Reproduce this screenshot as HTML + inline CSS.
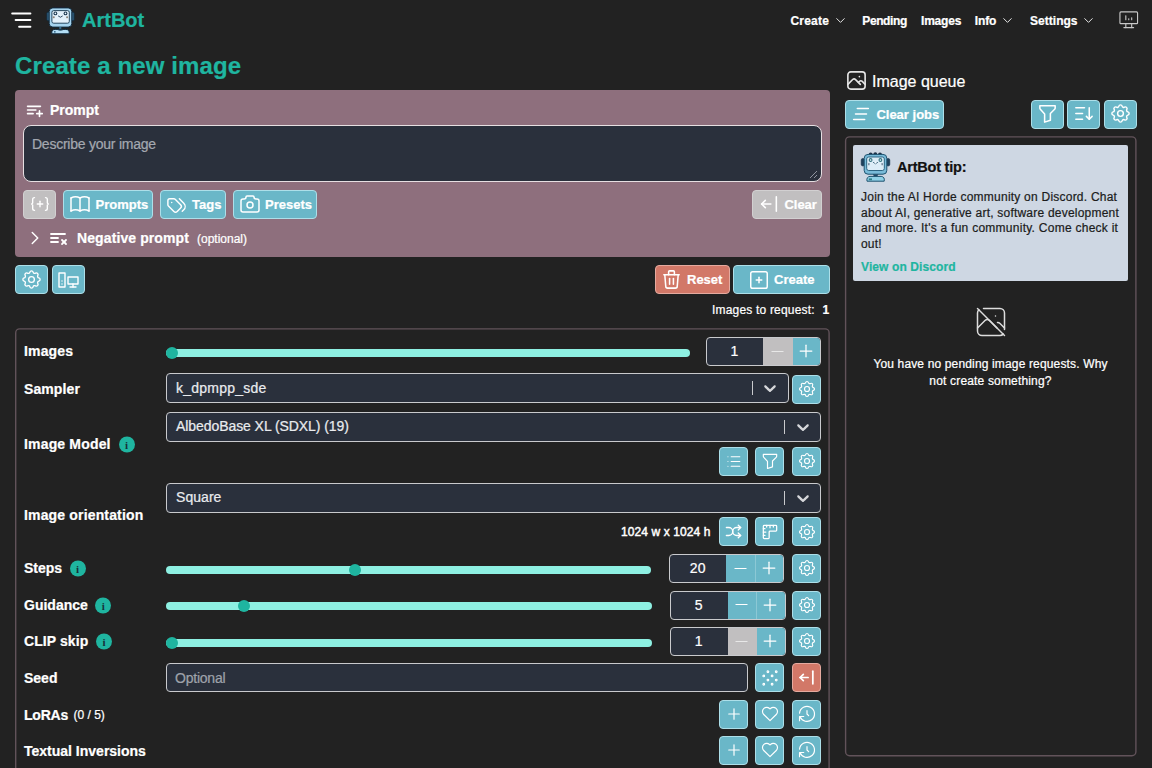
<!DOCTYPE html>
<html lang="en">
<head>
<meta charset="utf-8">
<title>ArtBot - Create a new image</title>
<style>
*{box-sizing:border-box;margin:0;padding:0}
html,body{width:1152px;height:768px;overflow:hidden;background:#222222;}
body{font-family:"Liberation Sans",Arial,Helvetica,sans-serif;color:#fff;position:relative;font-size:14px;}
.abs{position:absolute}
.t{position:absolute;white-space:nowrap;line-height:1;-webkit-text-stroke:0.22px}
.b{font-weight:700}
.teal{color:#1fb5a0}
.btn{position:absolute;background:#6ab7c8;border:1px solid #addfe9;border-radius:4px}
.btn.grey{background:#c1bfc0;border-color:#d2d0d1}
.btn.red{background:#d27868;border-color:#e5aa9f}
.inp{position:absolute;background:#2a303c;border:1px solid #c9cacd;border-radius:4px}
svg{display:block;overflow:visible}
.track{position:absolute;height:8px;border-radius:4px;background:#8ef0e2}
.thumb{position:absolute;width:12px;height:12px;border-radius:50%;background:#1fb5a0}
.info{position:absolute;width:16px;height:16px;border-radius:50%;background:#1fb5a0;color:#17313a;font:bold 11px/16px "Liberation Serif",serif;text-align:center}
.seg{position:absolute;top:0;bottom:0}
</style>
</head>
<body>
<svg class="abs" style="left:0;top:0" width="40" height="40" viewBox="0 0 40 40"><g stroke="#fff" stroke-width="2" stroke-linecap="round"><path d="M12.2 13.5H30.4"/><path d="M15.6 20.1H30.4"/><path d="M19.1 26.7H30.4"/></g></svg>
<svg class="abs" style="left:44px;top:4px" width="34" height="34" viewBox="44 4 34 34">
<rect x="46.8" y="12" width="3" height="8.8" rx="1.5" fill="#2f5b7a" stroke="#10283a" stroke-width="0.8"/>
<rect x="71.2" y="12" width="3" height="8.8" rx="1.5" fill="#2f5b7a" stroke="#10283a" stroke-width="0.8"/>
<path d="M54 7.6q1.4-1.6 2.8 0q1.4-1.6 2.8 0q1.4-1.6 2.8 0q1.4-1.6 2.8 0" fill="#2a2030" stroke="#2a1a28" stroke-width="0.8"/>
<rect x="49.2" y="7.9" width="22.6" height="19.2" rx="3.6" fill="#a5d3ee" stroke="#0f2a3e" stroke-width="1"/>
<rect x="51.9" y="10.6" width="17.4" height="12.6" rx="1.8" fill="#e3f1fb" stroke="#16384f" stroke-width="0.9"/>
<circle cx="55.4" cy="13.4" r="1.9" fill="#1d3a52"/><circle cx="55.4" cy="13.3" r="0.85" fill="#f4fbff"/>
<circle cx="65.5" cy="13.4" r="1.9" fill="#1d3a52"/><circle cx="65.5" cy="13.3" r="0.85" fill="#f4fbff"/>
<path d="M58.4 16.2q2 2.4 4 0" fill="none" stroke="#1d3a52" stroke-width="0.9" stroke-linecap="round"/>
<rect x="52.9" y="16.2" width="1.8" height="2" rx="0.6" fill="#8d8478"/><rect x="66.2" y="16.2" width="1.8" height="2" rx="0.6" fill="#8d8478"/>
<rect x="59.3" y="27" width="2" height="3" fill="#3c6f90"/>
<path d="M51.9 33.8q-0.9-4.2 3.3-4.4h10.6q4.2 0.2 3.3 4.4z" fill="#b3def5" stroke="#0f2a3e" stroke-width="1" stroke-linejoin="round"/>
<path d="M57.6 29.6q2.8 1.8 5.6 0" fill="none" stroke="#16384f" stroke-width="0.8"/>
<rect x="54" y="31" width="1.6" height="1.6" fill="#3c6f90"/>
</svg>
<div class="t b teal" style="left:82px;top:10.07px;font-size:20px;">ArtBot</div>
<div class="t b" style="left:790.5px;top:14.94px;font-size:12px;letter-spacing:0.2px">Create</div>
<div class="t b" style="left:862.3px;top:14.94px;font-size:12px;letter-spacing:-0.4px">Pending</div>
<div class="t b" style="left:921px;top:14.94px;font-size:12px;letter-spacing:-0.2px">Images</div>
<div class="t b" style="left:974.7px;top:14.94px;font-size:12px;letter-spacing:-0.1px">Info</div>
<div class="t b" style="left:1030px;top:14.94px;font-size:12px;letter-spacing:0.03px">Settings</div>
<svg class="abs" style="left:833.00px;top:13.00px" width="15" height="15" viewBox="0 0 24 24"><g fill="none" stroke="#e6e6e6" stroke-width="1.6" stroke-linecap="round" stroke-linejoin="round" ><path d="M6 9l6 6l6 -6"/></g></svg>
<svg class="abs" style="left:1000.10px;top:13.00px" width="15" height="15" viewBox="0 0 24 24"><g fill="none" stroke="#e6e6e6" stroke-width="1.6" stroke-linecap="round" stroke-linejoin="round" ><path d="M6 9l6 6l6 -6"/></g></svg>
<svg class="abs" style="left:1081.40px;top:13.00px" width="15" height="15" viewBox="0 0 24 24"><g fill="none" stroke="#e6e6e6" stroke-width="1.6" stroke-linecap="round" stroke-linejoin="round" ><path d="M6 9l6 6l6 -6"/></g></svg>
<svg class="abs" style="left:1116.75px;top:8.25px" width="23.5" height="23.5" viewBox="0 0 24 24"><g fill="none" stroke="#c8c8c8" stroke-width="1.15" stroke-linecap="round" stroke-linejoin="round" ><path d="M3 5a1 1 0 0 1 1 -1h16a1 1 0 0 1 1 1v10a1 1 0 0 1 -1 1h-16a1 1 0 0 1 -1 -1z"/><path d="M7 20h10"/><path d="M9 16v4"/><path d="M15 16v4"/><path d="M9 12v-4"/><path d="M12 12v-1"/><path d="M15 12v-2"/></g></svg>
<div class="t b teal" style="left:15px;top:53.68px;font-size:24px;letter-spacing:0.12px">Create a new image</div>
<div class="abs" style="left:15px;top:90px;width:814.6px;height:167px;background:#8e6f7d;border-radius:4px"></div>
<svg class="abs" style="left:23.20px;top:98.60px" width="22" height="22" viewBox="0 0 24 24"><g fill="none" stroke="#fff" stroke-width="1.8" stroke-linecap="round" stroke-linejoin="round" ><path d="M19 8h-14"/><path d="M5 12h9"/><path d="M11 16h-6"/><path d="M15 16h6"/><path d="M18 13v6"/></g></svg>
<div class="t b" style="left:50px;top:102.75px;font-size:14px;">Prompt</div>
<div class="inp" style="left:23px;top:125px;width:798.5px;height:57px;border-radius:8px;border-color:#e6dfe2"></div>
<svg class="abs" style="left:808px;top:169px" width="10" height="10" viewBox="0 0 10 10"><path d="M9 2L2 9M9 6L6 9" stroke="#8f949e" stroke-width="1" fill="none"/></svg>
<div class="t " style="left:32px;top:137.15px;font-size:14px;color:#a4a8b0;letter-spacing:-0.24px">Describe your image</div>
<div class="btn grey" style="left:23px;top:190px;width:33px;height:29px"></div>
<svg class="abs" style="left:28.50px;top:193.20px" width="22" height="22" viewBox="0 0 24 24"><g fill="none" stroke="#fff" stroke-width="1.5" stroke-linecap="round" stroke-linejoin="round" ><path d="M9 12h6"/><path d="M12 9v6"/><path d="M6 19a2 2 0 0 1 -2 -2v-4l-1 -1l1 -1v-4a2 2 0 0 1 2 -2"/><path d="M18 19a2 2 0 0 0 2 -2v-4l1 -1l-1 -1v-4a2 2 0 0 0 -2 -2"/></g></svg>
<div class="btn " style="left:63px;top:190px;width:90px;height:29px"></div>
<svg class="abs" style="left:67.60px;top:192.00px" width="24" height="24" viewBox="0 0 24 24"><g fill="none" stroke="#fff" stroke-width="1.5" stroke-linecap="round" stroke-linejoin="round" ><path d="M3 19a9 9 0 0 1 9 0a9 9 0 0 1 9 0"/><path d="M3 6a9 9 0 0 1 9 0a9 9 0 0 1 9 0"/><path d="M3 6l0 13"/><path d="M12 6l0 13"/><path d="M21 6l0 13"/></g></svg>
<div class="t b" style="left:95.5px;top:198.00px;font-size:13px;">Prompts</div>
<div class="btn " style="left:160px;top:190px;width:66px;height:29px"></div>
<svg class="abs" style="left:164.90px;top:192.50px" width="23" height="23" viewBox="0 0 24 24"><g fill="none" stroke="#fff" stroke-width="1.5" stroke-linecap="round" stroke-linejoin="round" ><path d="M3 8v4.172a2 2 0 0 0 .586 1.414l5.71 5.71a2.41 2.41 0 0 0 3.408 0l3.592 -3.592a2.41 2.41 0 0 0 0 -3.408l-5.71 -5.71a2 2 0 0 0 -1.414 -.586h-4.172a2 2 0 0 0 -2 2z"/><path d="M18 19l1.592 -1.592a4.82 4.82 0 0 0 0 -6.816l-4.592 -4.592"/><path d="M7 10h-.01"/></g></svg>
<div class="t b" style="left:192.1px;top:198.00px;font-size:13px;">Tags</div>
<div class="btn " style="left:233px;top:190px;width:84px;height:29px"></div>
<svg class="abs" style="left:237.50px;top:192.00px" width="24" height="24" viewBox="0 0 24 24"><g fill="none" stroke="#fff" stroke-width="1.5" stroke-linecap="round" stroke-linejoin="round" ><path d="M5 7h1a2 2 0 0 0 2 -2a1 1 0 0 1 1 -1h6a1 1 0 0 1 1 1a2 2 0 0 0 2 2h1a2 2 0 0 1 2 2v9a2 2 0 0 1 -2 2h-14a2 2 0 0 1 -2 -2v-9a2 2 0 0 1 2 -2"/><path d="M9 13a3 3 0 1 0 6 0a3 3 0 0 0 -6 0"/></g></svg>
<div class="t b" style="left:265px;top:198.00px;font-size:13px;">Presets</div>
<div class="btn grey" style="left:752px;top:190px;width:70px;height:29px"></div>
<svg class="abs" style="left:757.50px;top:193.30px" width="22" height="22" viewBox="0 0 24 24"><g fill="none" stroke="#fff" stroke-width="1.7" stroke-linecap="round" stroke-linejoin="round" ><path d="M4 12l10 0"/><path d="M4 12l4 4"/><path d="M4 12l4 -4"/><path d="M20 4l0 16"/></g></svg>
<div class="t b" style="left:784.4px;top:198.00px;font-size:13px;">Clear</div>
<svg class="abs" style="left:23.50px;top:227.20px" width="22" height="22" viewBox="0 0 24 24"><g fill="none" stroke="#fff" stroke-width="1.6" stroke-linecap="round" stroke-linejoin="round" ><path d="M9 6l6 6l-6 6"/></g></svg>
<svg class="abs" style="left:45.80px;top:225.90px" width="24" height="24" viewBox="0 0 24 24"><g fill="none" stroke="#fff" stroke-width="1.8" stroke-linecap="round" stroke-linejoin="round" ><path d="M19 8h-14"/><path d="M5 12h7"/><path d="M12 16h-7"/><path d="M16 14l4 4"/><path d="M20 14l-4 4"/></g></svg>
<div class="t b" style="left:77px;top:231.15px;font-size:14px;letter-spacing:0.1px">Negative prompt</div>
<div class="t " style="left:197px;top:232.84px;font-size:12px;">(optional)</div>
<div class="btn " style="left:15px;top:265px;width:33px;height:29px"></div>
<svg class="abs" style="left:20.10px;top:267.80px" width="23" height="23" viewBox="0 0 24 24"><g fill="none" stroke="#fff" stroke-width="1.4" stroke-linecap="round" stroke-linejoin="round" ><path d="M10.325 4.317c.426 -1.756 2.924 -1.756 3.35 0a1.724 1.724 0 0 0 2.573 1.066c1.543 -.94 3.31 .826 2.37 2.37a1.724 1.724 0 0 0 1.065 2.572c1.756 .426 1.756 2.924 0 3.35a1.724 1.724 0 0 0 -1.066 2.573c.94 1.543 -.826 3.31 -2.37 2.37a1.724 1.724 0 0 0 -2.572 1.065c-.426 1.756 -2.924 1.756 -3.35 0a1.724 1.724 0 0 0 -2.573 -1.066c-1.543 .94 -3.31 -.826 -2.37 -2.37a1.724 1.724 0 0 0 -1.065 -2.572c-1.756 -.426 -1.756 -2.924 0 -3.35a1.724 1.724 0 0 0 1.066 -2.573c-.94 -1.543 .826 -3.31 2.37 -2.37c1 .608 2.296 .07 2.572 -1.065z"/><path d="M9 12a3 3 0 1 0 6 0a3 3 0 0 0 -6 0"/></g></svg>
<div class="btn " style="left:52px;top:265px;width:33px;height:29px"></div>
<svg class="abs" style="left:56.25px;top:267.50px" width="24" height="24" viewBox="0 0 24 24"><g fill="none" stroke="#fff" stroke-width="1.4" stroke-linecap="round" stroke-linejoin="round" ><path d="M3 5h6v14h-6z"/><path d="M12 9h10v7h-10z"/><path d="M14 19h6"/><path d="M17 16v3"/><path d="M6 13v.01"/><path d="M6 16v.01"/></g></svg>
<div class="btn red" style="left:655px;top:265px;width:75px;height:29px"></div>
<svg class="abs" style="left:659.80px;top:268.00px" width="23" height="23" viewBox="0 0 24 24"><g fill="none" stroke="#fff" stroke-width="1.6" stroke-linecap="round" stroke-linejoin="round" ><path d="M4 7l16 0"/><path d="M10 11l0 6"/><path d="M14 11l0 6"/><path d="M5 7l1 12a2 2 0 0 0 2 2h8a2 2 0 0 0 2 -2l1 -12"/><path d="M9 7v-3a1 1 0 0 1 1 -1h4a1 1 0 0 1 1 1v3"/></g></svg>
<div class="t b" style="left:687px;top:273.00px;font-size:13px;">Reset</div>
<div class="btn " style="left:733px;top:265px;width:96.6px;height:29px"></div>
<svg class="abs" style="left:748.00px;top:268.50px" width="22" height="22" viewBox="0 0 24 24"><g fill="none" stroke="#fff" stroke-width="1.6" stroke-linecap="round" stroke-linejoin="round" ><path d="M9 12h6"/><path d="M12 9v6"/><path d="M3 5a2 2 0 0 1 2 -2h14a2 2 0 0 1 2 2v14a2 2 0 0 1 -2 2h-14a2 2 0 0 1 -2 -2v-14z"/></g></svg>
<div class="t b" style="left:774px;top:273.00px;font-size:13px;">Create</div>
<div class="t " style="left:712px;top:303.84px;font-size:12px;letter-spacing:0.19px">Images to request:</div>
<div class="t b" style="left:822.5px;top:303.84px;font-size:12px;">1</div>
<svg class="abs" style="left:0;top:0" width="1152" height="768" viewBox="0 0 1152 768"><rect x="15.7" y="328.9" width="813.4" height="460" rx="4" fill="none" stroke="#62535a" stroke-width="1.4"/><rect x="845.6" y="136.9" width="290.3" height="618.8" rx="4" fill="none" stroke="#62535a" stroke-width="1.4"/></svg>
<div class="t b" style="left:24px;top:343.95px;font-size:14px;letter-spacing:0.15px">Images</div>
<div class="track" style="left:166px;top:348.7px;width:524.2px"></div><div class="thumb" style="left:166px;top:346.7px"></div>
<div class="inp" style="left:705.7px;top:337px;width:115.3px;height:29px;overflow:hidden"><div class="seg" style="left:56.6px;width:28.6px;background:#c1bfc0"></div><div class="seg" style="left:85.2px;right:0;background:#6ab7c8;border-left:1px solid #c1bfc0"></div></div>
<div class="t " style="left:705.7px;top:344.25px;font-size:14px;width:57.6px;text-align:center">1</div>
<svg class="abs" style="left:768.10px;top:341.90px" width="19" height="19" viewBox="0 0 24 24"><g fill="none" stroke="#e8e8e8" stroke-width="1.5" stroke-linecap="round" stroke-linejoin="round" ><path d="M5 12l14 0"/></g></svg>
<svg class="abs" style="left:796.30px;top:341.40px" width="20" height="20" viewBox="0 0 24 24"><g fill="none" stroke="#fff" stroke-width="1.5" stroke-linecap="round" stroke-linejoin="round" ><path d="M12 5l0 14"/><path d="M5 12l14 0"/></g></svg>
<div class="t b" style="left:24px;top:382.15px;font-size:14px;letter-spacing:0.1px">Sampler</div>
<div class="inp" style="left:166px;top:373px;width:622.5px;height:30.4px"></div>
<div class="t " style="left:176px;top:380.75px;font-size:14px;color:#e9ebee;letter-spacing:0.23px">k_dpmpp_sde</div>
<div class="abs" style="left:751.5px;top:381px;width:1px;height:14.4px;background:#c9cacd"></div><svg class="abs" style="left:760.1px;top:377.75px" width="20" height="20" viewBox="0 0 20 20"><path fill="#d6d7da" d="M4.516 7.548c0.436-0.446 1.043-0.481 1.576 0l3.908 3.747 3.908-3.747c0.533-0.481 1.141-0.446 1.574 0 0.436 0.445 0.408 1.197 0 1.615-0.406 0.418-4.695 4.502-4.695 4.502-0.217 0.223-0.502 0.335-0.787 0.335s-0.570-0.112-0.789-0.335c0 0-4.287-4.084-4.695-4.502s-0.436-1.170 0-1.615z"/></svg>
<div class="btn " style="left:792px;top:374.7px;width:29px;height:29px"></div>
<svg class="abs" style="left:796.50px;top:379.10px" width="20" height="20" viewBox="0 0 24 24"><g fill="none" stroke="#fff" stroke-width="1.4" stroke-linecap="round" stroke-linejoin="round" ><path d="M10.325 4.317c.426 -1.756 2.924 -1.756 3.35 0a1.724 1.724 0 0 0 2.573 1.066c1.543 -.94 3.31 .826 2.37 2.37a1.724 1.724 0 0 0 1.065 2.572c1.756 .426 1.756 2.924 0 3.35a1.724 1.724 0 0 0 -1.066 2.573c.94 1.543 -.826 3.31 -2.37 2.37a1.724 1.724 0 0 0 -2.572 1.065c-.426 1.756 -2.924 1.756 -3.35 0a1.724 1.724 0 0 0 -2.573 -1.066c-1.543 .94 -3.31 -.826 -2.37 -2.37a1.724 1.724 0 0 0 -1.065 -2.572c-1.756 -.426 -1.756 -2.924 0 -3.35a1.724 1.724 0 0 0 1.066 -2.573c-.94 -1.543 .826 -3.31 2.37 -2.37c1 .608 2.296 .07 2.572 -1.065z"/><path d="M9 12a3 3 0 1 0 6 0a3 3 0 0 0 -6 0"/></g></svg>
<div class="t b" style="left:24px;top:436.65px;font-size:14px;letter-spacing:0.17px">Image Model</div>
<div class="info" style="left:118.5px;top:435.5px;transform:translateY(0.5px)">i</div>
<div class="inp" style="left:166px;top:412px;width:655px;height:30.2px"></div>
<div class="t " style="left:176px;top:419.05px;font-size:14px;color:#e9ebee;letter-spacing:-0.07px">AlbedoBase XL (SDXL) (19)</div>
<div class="abs" style="left:784px;top:420px;width:1px;height:14.2px;background:#c9cacd"></div><svg class="abs" style="left:792.6px;top:416.65px" width="20" height="20" viewBox="0 0 20 20"><path fill="#d6d7da" d="M4.516 7.548c0.436-0.446 1.043-0.481 1.576 0l3.908 3.747 3.908-3.747c0.533-0.481 1.141-0.446 1.574 0 0.436 0.445 0.408 1.197 0 1.615-0.406 0.418-4.695 4.502-4.695 4.502-0.217 0.223-0.502 0.335-0.787 0.335s-0.570-0.112-0.789-0.335c0 0-4.287-4.084-4.695-4.502s-0.436-1.170 0-1.615z"/></svg>
<div class="btn " style="left:719px;top:446.6px;width:29px;height:29px"></div>
<svg class="abs" style="left:724.00px;top:451.50px" width="19" height="19" viewBox="0 0 24 24"><g fill="none" stroke="#fff" stroke-width="1.3" stroke-linecap="round" stroke-linejoin="round" ><path d="M9 6l11 0"/><path d="M9 12l11 0"/><path d="M9 18l11 0"/><path d="M5 6l0 .01"/><path d="M5 12l0 .01"/><path d="M5 18l0 .01"/></g></svg>
<div class="btn " style="left:755.2px;top:446.6px;width:29px;height:29px"></div>
<svg class="abs" style="left:759.70px;top:451.00px" width="20" height="20" viewBox="0 0 24 24"><g fill="none" stroke="#fff" stroke-width="1.4" stroke-linecap="round" stroke-linejoin="round" ><path d="M4 4h16v2.172a2 2 0 0 1 -.586 1.414l-4.414 4.414v7l-6 2v-8.5l-4.48 -4.928a2 2 0 0 1 -.52 -1.345v-2.227z"/></g></svg>
<div class="btn " style="left:792px;top:446.6px;width:29px;height:29px"></div>
<svg class="abs" style="left:796.50px;top:451.00px" width="20" height="20" viewBox="0 0 24 24"><g fill="none" stroke="#fff" stroke-width="1.4" stroke-linecap="round" stroke-linejoin="round" ><path d="M10.325 4.317c.426 -1.756 2.924 -1.756 3.35 0a1.724 1.724 0 0 0 2.573 1.066c1.543 -.94 3.31 .826 2.37 2.37a1.724 1.724 0 0 0 1.065 2.572c1.756 .426 1.756 2.924 0 3.35a1.724 1.724 0 0 0 -1.066 2.573c.94 1.543 -.826 3.31 -2.37 2.37a1.724 1.724 0 0 0 -2.572 1.065c-.426 1.756 -2.924 1.756 -3.35 0a1.724 1.724 0 0 0 -2.573 -1.066c-1.543 .94 -3.31 -.826 -2.37 -2.37a1.724 1.724 0 0 0 -1.065 -2.572c-1.756 -.426 -1.756 -2.924 0 -3.35a1.724 1.724 0 0 0 1.066 -2.573c-.94 -1.543 .826 -3.31 2.37 -2.37c1 .608 2.296 .07 2.572 -1.065z"/><path d="M9 12a3 3 0 1 0 6 0a3 3 0 0 0 -6 0"/></g></svg>
<div class="t b" style="left:24px;top:507.65px;font-size:14px;letter-spacing:0.16px">Image orientation</div>
<div class="inp" style="left:166px;top:483.4px;width:655px;height:30px"></div>
<div class="t " style="left:176px;top:490.15px;font-size:14px;color:#e9ebee;letter-spacing:0.05px">Square</div>
<div class="abs" style="left:784px;top:491.4px;width:1px;height:14px;background:#c9cacd"></div><svg class="abs" style="left:792.6px;top:487.95px" width="20" height="20" viewBox="0 0 20 20"><path fill="#d6d7da" d="M4.516 7.548c0.436-0.446 1.043-0.481 1.576 0l3.908 3.747 3.908-3.747c0.533-0.481 1.141-0.446 1.574 0 0.436 0.445 0.408 1.197 0 1.615-0.406 0.418-4.695 4.502-4.695 4.502-0.217 0.223-0.502 0.335-0.787 0.335s-0.570-0.112-0.789-0.335c0 0-4.287-4.084-4.695-4.502s-0.436-1.170 0-1.615z"/></svg>
<div class="t " style="left:620.9px;top:526.04px;font-size:12px;letter-spacing:0.11px;-webkit-text-stroke:0.45px">1024 w x 1024 h</div>
<div class="btn " style="left:719px;top:517.4px;width:29px;height:29px"></div>
<svg class="abs" style="left:724.00px;top:522.30px" width="19" height="19" viewBox="0 0 24 24"><g fill="none" stroke="#fff" stroke-width="1.7" stroke-linecap="round" stroke-linejoin="round" ><path d="M18 4l3 3l-3 3"/><path d="M18 20l3 -3l-3 -3"/><path d="M3 7h3a5 5 0 0 1 5 5a5 5 0 0 0 5 5h5"/><path d="M3 17h3a5 5 0 0 0 5 -5a5 5 0 0 1 5 -5h5"/></g></svg>
<div class="btn " style="left:755.2px;top:517.4px;width:29px;height:29px"></div>
<svg class="abs" style="left:759.70px;top:521.80px" width="20" height="20" viewBox="0 0 24 24"><g fill="none" stroke="#fff" stroke-width="1.5" stroke-linecap="round" stroke-linejoin="round" ><path d="M5 4h14a1 1 0 0 1 1 1v5a1 1 0 0 1 -1 1h-7a1 1 0 0 0 -1 1v7a1 1 0 0 1 -1 1h-5a1 1 0 0 1 -1 -1v-14a1 1 0 0 1 1 -1"/><path d="M4 8l2 0"/><path d="M4 12l3 0"/><path d="M4 16l2 0"/><path d="M8 4l0 2"/><path d="M12 4l0 3"/><path d="M16 4l0 2"/></g></svg>
<div class="btn " style="left:792px;top:517.4px;width:29px;height:29px"></div>
<svg class="abs" style="left:796.50px;top:521.80px" width="20" height="20" viewBox="0 0 24 24"><g fill="none" stroke="#fff" stroke-width="1.4" stroke-linecap="round" stroke-linejoin="round" ><path d="M10.325 4.317c.426 -1.756 2.924 -1.756 3.35 0a1.724 1.724 0 0 0 2.573 1.066c1.543 -.94 3.31 .826 2.37 2.37a1.724 1.724 0 0 0 1.065 2.572c1.756 .426 1.756 2.924 0 3.35a1.724 1.724 0 0 0 -1.066 2.573c.94 1.543 -.826 3.31 -2.37 2.37a1.724 1.724 0 0 0 -2.572 1.065c-.426 1.756 -2.924 1.756 -3.35 0a1.724 1.724 0 0 0 -2.573 -1.066c-1.543 .94 -3.31 -.826 -2.37 -2.37a1.724 1.724 0 0 0 -1.065 -2.572c-1.756 -.426 -1.756 -2.924 0 -3.35a1.724 1.724 0 0 0 1.066 -2.573c-.94 -1.543 .826 -3.31 2.37 -2.37c1 .608 2.296 .07 2.572 -1.065z"/><path d="M9 12a3 3 0 1 0 6 0a3 3 0 0 0 -6 0"/></g></svg>
<div class="t b" style="left:24px;top:561.15px;font-size:14px;">Steps</div>
<div class="info" style="left:69.5px;top:560.4px;transform:translateY(0.5px)">i</div>
<div class="track" style="left:166px;top:565.7px;width:484.5px"></div><div class="thumb" style="left:349px;top:563.7px"></div>
<div class="inp" style="left:668.9px;top:554px;width:115.5px;height:29px;overflow:hidden"><div class="seg" style="left:56.5px;width:28.3px;background:#6ab7c8"></div><div class="seg" style="left:84.8px;right:0;background:#6ab7c8;border-left:1px solid #8cc8d5"></div></div>
<div class="t " style="left:668.9px;top:561.25px;font-size:14px;width:57.5px;text-align:center">20</div>
<svg class="abs" style="left:731.05px;top:558.90px" width="19" height="19" viewBox="0 0 24 24"><g fill="none" stroke="#fff" stroke-width="1.5" stroke-linecap="round" stroke-linejoin="round" ><path d="M5 12l14 0"/></g></svg>
<svg class="abs" style="left:759.10px;top:558.40px" width="20" height="20" viewBox="0 0 24 24"><g fill="none" stroke="#fff" stroke-width="1.5" stroke-linecap="round" stroke-linejoin="round" ><path d="M12 5l0 14"/><path d="M5 12l14 0"/></g></svg>
<div class="btn " style="left:792px;top:554px;width:29px;height:29px"></div>
<svg class="abs" style="left:796.50px;top:558.40px" width="20" height="20" viewBox="0 0 24 24"><g fill="none" stroke="#fff" stroke-width="1.4" stroke-linecap="round" stroke-linejoin="round" ><path d="M10.325 4.317c.426 -1.756 2.924 -1.756 3.35 0a1.724 1.724 0 0 0 2.573 1.066c1.543 -.94 3.31 .826 2.37 2.37a1.724 1.724 0 0 0 1.065 2.572c1.756 .426 1.756 2.924 0 3.35a1.724 1.724 0 0 0 -1.066 2.573c.94 1.543 -.826 3.31 -2.37 2.37a1.724 1.724 0 0 0 -2.572 1.065c-.426 1.756 -2.924 1.756 -3.35 0a1.724 1.724 0 0 0 -2.573 -1.066c-1.543 .94 -3.31 -.826 -2.37 -2.37a1.724 1.724 0 0 0 -1.065 -2.572c-1.756 -.426 -1.756 -2.924 0 -3.35a1.724 1.724 0 0 0 1.066 -2.573c-.94 -1.543 .826 -3.31 2.37 -2.37c1 .608 2.296 .07 2.572 -1.065z"/><path d="M9 12a3 3 0 1 0 6 0a3 3 0 0 0 -6 0"/></g></svg>
<div class="t b" style="left:24px;top:597.85px;font-size:14px;">Guidance</div>
<div class="info" style="left:95.2px;top:596.9px;transform:translateY(0.5px)">i</div>
<div class="track" style="left:166px;top:602.1px;width:486.2px"></div><div class="thumb" style="left:238px;top:600.1px"></div>
<div class="inp" style="left:670px;top:590.5px;width:115.5px;height:29px;overflow:hidden"><div class="seg" style="left:56.5px;width:28.3px;background:#6ab7c8"></div><div class="seg" style="left:84.8px;right:0;background:#6ab7c8;border-left:1px solid #8cc8d5"></div></div>
<div class="t " style="left:670px;top:597.75px;font-size:14px;width:57.5px;text-align:center">5</div>
<svg class="abs" style="left:732.15px;top:595.40px" width="19" height="19" viewBox="0 0 24 24"><g fill="none" stroke="#fff" stroke-width="1.5" stroke-linecap="round" stroke-linejoin="round" ><path d="M5 12l14 0"/></g></svg>
<svg class="abs" style="left:760.20px;top:594.90px" width="20" height="20" viewBox="0 0 24 24"><g fill="none" stroke="#fff" stroke-width="1.5" stroke-linecap="round" stroke-linejoin="round" ><path d="M12 5l0 14"/><path d="M5 12l14 0"/></g></svg>
<div class="btn " style="left:792px;top:590.5px;width:29px;height:29px"></div>
<svg class="abs" style="left:796.50px;top:594.90px" width="20" height="20" viewBox="0 0 24 24"><g fill="none" stroke="#fff" stroke-width="1.4" stroke-linecap="round" stroke-linejoin="round" ><path d="M10.325 4.317c.426 -1.756 2.924 -1.756 3.35 0a1.724 1.724 0 0 0 2.573 1.066c1.543 -.94 3.31 .826 2.37 2.37a1.724 1.724 0 0 0 1.065 2.572c1.756 .426 1.756 2.924 0 3.35a1.724 1.724 0 0 0 -1.066 2.573c.94 1.543 -.826 3.31 -2.37 2.37a1.724 1.724 0 0 0 -2.572 1.065c-.426 1.756 -2.924 1.756 -3.35 0a1.724 1.724 0 0 0 -2.573 -1.066c-1.543 .94 -3.31 -.826 -2.37 -2.37a1.724 1.724 0 0 0 -1.065 -2.572c-1.756 -.426 -1.756 -2.924 0 -3.35a1.724 1.724 0 0 0 1.066 -2.573c-.94 -1.543 .826 -3.31 2.37 -2.37c1 .608 2.296 .07 2.572 -1.065z"/><path d="M9 12a3 3 0 1 0 6 0a3 3 0 0 0 -6 0"/></g></svg>
<div class="t b" style="left:24px;top:634.35px;font-size:14px;letter-spacing:0.08px">CLIP skip</div>
<div class="info" style="left:96px;top:633.4px;transform:translateY(0.5px)">i</div>
<div class="track" style="left:166px;top:638.7px;width:486.2px"></div><div class="thumb" style="left:166px;top:636.7px"></div>
<div class="inp" style="left:670px;top:627px;width:115.5px;height:29px;overflow:hidden"><div class="seg" style="left:56.5px;width:28.3px;background:#c1bfc0"></div><div class="seg" style="left:84.8px;right:0;background:#6ab7c8;border-left:1px solid #c1bfc0"></div></div>
<div class="t " style="left:670px;top:634.25px;font-size:14px;width:57.5px;text-align:center">1</div>
<svg class="abs" style="left:732.15px;top:631.90px" width="19" height="19" viewBox="0 0 24 24"><g fill="none" stroke="#e8e8e8" stroke-width="1.5" stroke-linecap="round" stroke-linejoin="round" ><path d="M5 12l14 0"/></g></svg>
<svg class="abs" style="left:760.20px;top:631.40px" width="20" height="20" viewBox="0 0 24 24"><g fill="none" stroke="#fff" stroke-width="1.5" stroke-linecap="round" stroke-linejoin="round" ><path d="M12 5l0 14"/><path d="M5 12l14 0"/></g></svg>
<div class="btn " style="left:792px;top:627px;width:29px;height:29px"></div>
<svg class="abs" style="left:796.50px;top:631.40px" width="20" height="20" viewBox="0 0 24 24"><g fill="none" stroke="#fff" stroke-width="1.4" stroke-linecap="round" stroke-linejoin="round" ><path d="M10.325 4.317c.426 -1.756 2.924 -1.756 3.35 0a1.724 1.724 0 0 0 2.573 1.066c1.543 -.94 3.31 .826 2.37 2.37a1.724 1.724 0 0 0 1.065 2.572c1.756 .426 1.756 2.924 0 3.35a1.724 1.724 0 0 0 -1.066 2.573c.94 1.543 -.826 3.31 -2.37 2.37a1.724 1.724 0 0 0 -2.572 1.065c-.426 1.756 -2.924 1.756 -3.35 0a1.724 1.724 0 0 0 -2.573 -1.066c-1.543 .94 -3.31 -.826 -2.37 -2.37a1.724 1.724 0 0 0 -1.065 -2.572c-1.756 -.426 -1.756 -2.924 0 -3.35a1.724 1.724 0 0 0 1.066 -2.573c-.94 -1.543 .826 -3.31 2.37 -2.37c1 .608 2.296 .07 2.572 -1.065z"/><path d="M9 12a3 3 0 1 0 6 0a3 3 0 0 0 -6 0"/></g></svg>
<div class="t b" style="left:24px;top:671.15px;font-size:14px;">Seed</div>
<div class="inp" style="left:166px;top:663.3px;width:582px;height:29px"></div>
<div class="t " style="left:175px;top:671.15px;font-size:14px;color:#9ea2aa;letter-spacing:-0.22px">Optional</div>
<div class="btn " style="left:755.2px;top:663.3px;width:29px;height:29px"></div>
<svg class="abs" style="left:759.70px;top:667.70px" width="20" height="20" viewBox="0 0 24 24"><g fill="none" stroke="#fff" stroke-width="1.4" stroke-linecap="round" stroke-linejoin="round" ><path d="M4.5 9.5m-1 0a1 1 0 1 0 2 0a1 1 0 1 0 -2 0"/><path d="M9.5 4.5m-1 0a1 1 0 1 0 2 0a1 1 0 1 0 -2 0"/><path d="M9.5 14.5m-1 0a1 1 0 1 0 2 0a1 1 0 1 0 -2 0"/><path d="M4.5 19.5m-1 0a1 1 0 1 0 2 0a1 1 0 1 0 -2 0"/><path d="M14.5 9.5m-1 0a1 1 0 1 0 2 0a1 1 0 1 0 -2 0"/><path d="M19.5 4.5m-1 0a1 1 0 1 0 2 0a1 1 0 1 0 -2 0"/><path d="M14.5 19.5m-1 0a1 1 0 1 0 2 0a1 1 0 1 0 -2 0"/><path d="M19.5 14.5m-1 0a1 1 0 1 0 2 0a1 1 0 1 0 -2 0"/></g></svg>
<div class="btn red" style="left:792px;top:663.3px;width:29px;height:29px"></div>
<svg class="abs" style="left:797.00px;top:668.20px" width="19" height="19" viewBox="0 0 24 24"><g fill="none" stroke="#fff" stroke-width="2.2" stroke-linecap="round" stroke-linejoin="round" ><path d="M4 12l10 0"/><path d="M4 12l4 4"/><path d="M4 12l4 -4"/><path d="M20 4l0 16"/></g></svg>
<div class="t b" style="left:24px;top:707.65px;font-size:14px;letter-spacing:-0.2px">LoRAs</div>
<div class="t " style="left:73.5px;top:709.34px;font-size:12px;">(0 / 5)</div>
<div class="btn " style="left:719px;top:700px;width:29px;height:29px"></div>
<svg class="abs" style="left:724.50px;top:705.40px" width="18" height="18" viewBox="0 0 24 24"><g fill="none" stroke="#fff" stroke-width="1.6" stroke-linecap="round" stroke-linejoin="round" ><path d="M12 5l0 14"/><path d="M5 12l14 0"/></g></svg>
<div class="btn " style="left:755.2px;top:700px;width:29px;height:29px"></div>
<svg class="abs" style="left:759.70px;top:704.40px" width="20" height="20" viewBox="0 0 24 24"><g fill="none" stroke="#fff" stroke-width="1.4" stroke-linecap="round" stroke-linejoin="round" ><path d="M19.5 12.572l-7.5 7.428l-7.5 -7.428a5 5 0 1 1 7.5 -6.566a5 5 0 1 1 7.5 6.572"/></g></svg>
<div class="btn " style="left:792px;top:700px;width:29px;height:29px"></div>
<svg class="abs" style="left:796.50px;top:704.40px" width="20" height="20" viewBox="0 0 24 24"><g fill="none" stroke="#fff" stroke-width="1.4" stroke-linecap="round" stroke-linejoin="round" ><path d="M12 8l0 4l2 2"/><path d="M3.05 11a9 9 0 1 1 .5 4m-.5 5v-5h5"/></g></svg>
<div class="t b" style="left:24px;top:744.15px;font-size:14px;">Textual Inversions</div>
<div class="btn " style="left:719px;top:736px;width:29px;height:29px"></div>
<svg class="abs" style="left:724.50px;top:741.40px" width="18" height="18" viewBox="0 0 24 24"><g fill="none" stroke="#fff" stroke-width="1.6" stroke-linecap="round" stroke-linejoin="round" ><path d="M12 5l0 14"/><path d="M5 12l14 0"/></g></svg>
<div class="btn " style="left:755.2px;top:736px;width:29px;height:29px"></div>
<svg class="abs" style="left:759.70px;top:740.40px" width="20" height="20" viewBox="0 0 24 24"><g fill="none" stroke="#fff" stroke-width="1.4" stroke-linecap="round" stroke-linejoin="round" ><path d="M19.5 12.572l-7.5 7.428l-7.5 -7.428a5 5 0 1 1 7.5 -6.566a5 5 0 1 1 7.5 6.572"/></g></svg>
<div class="btn " style="left:792px;top:736px;width:29px;height:29px"></div>
<svg class="abs" style="left:796.50px;top:740.40px" width="20" height="20" viewBox="0 0 24 24"><g fill="none" stroke="#fff" stroke-width="1.4" stroke-linecap="round" stroke-linejoin="round" ><path d="M12 8l0 4l2 2"/><path d="M3.05 11a9 9 0 1 1 .5 4m-.5 5v-5h5"/></g></svg>
<svg class="abs" style="left:844.60px;top:69.40px" width="23" height="23" viewBox="0 0 24 24"><g fill="none" stroke="#e4e4e4" stroke-width="1.7" stroke-linecap="round" stroke-linejoin="round" ><path d="M15 8h.01"/><path d="M3 6a3 3 0 0 1 3 -3h12a3 3 0 0 1 3 3v12a3 3 0 0 1 -3 3h-12a3 3 0 0 1 -3 -3v-12z"/><path d="M3 16l5 -5c.928 -.893 2.072 -.893 3 0l5 5"/><path d="M14 14l1 -1c.928 -.893 2.072 -.893 3 0l3 3"/></g></svg>
<div class="t " style="left:872px;top:73.96px;font-size:16px;">Image queue</div>
<div class="btn " style="left:845px;top:100px;width:98.8px;height:29px"></div>
<svg class="abs" style="left:850.00px;top:102.90px" width="22" height="22" viewBox="0 0 24 24"><g fill="none" stroke="#fff" stroke-width="1.7" stroke-linecap="round" stroke-linejoin="round" ><path d="M8 6h12"/><path d="M6 12h12"/><path d="M4 18h12"/></g></svg>
<div class="t b" style="left:876.4px;top:108.00px;font-size:13px;">Clear jobs</div>
<div class="btn " style="left:1031px;top:100px;width:32.6px;height:29px"></div>
<svg class="abs" style="left:1035.80px;top:102.40px" width="23" height="23" viewBox="0 0 24 24"><g fill="none" stroke="#fff" stroke-width="1.6" stroke-linecap="round" stroke-linejoin="round" ><path d="M4 4h16v2.172a2 2 0 0 1 -.586 1.414l-4.414 4.414v7l-6 2v-8.5l-4.48 -4.928a2 2 0 0 1 -.52 -1.345v-2.227z"/></g></svg>
<div class="btn " style="left:1067.4px;top:100px;width:32.6px;height:29px"></div>
<svg class="abs" style="left:1072.00px;top:102.40px" width="23" height="23" viewBox="0 0 24 24"><g fill="none" stroke="#fff" stroke-width="1.6" stroke-linecap="round" stroke-linejoin="round" ><path d="M4 6l9 0"/><path d="M4 12l7 0"/><path d="M4 18l7 0"/><path d="M15 15l3 3l3 -3"/><path d="M18 6l0 12"/></g></svg>
<div class="btn " style="left:1104.2px;top:100px;width:32.6px;height:29px"></div>
<svg class="abs" style="left:1108.90px;top:102.40px" width="23" height="23" viewBox="0 0 24 24"><g fill="none" stroke="#fff" stroke-width="1.5" stroke-linecap="round" stroke-linejoin="round" ><path d="M10.325 4.317c.426 -1.756 2.924 -1.756 3.35 0a1.724 1.724 0 0 0 2.573 1.066c1.543 -.94 3.31 .826 2.37 2.37a1.724 1.724 0 0 0 1.065 2.572c1.756 .426 1.756 2.924 0 3.35a1.724 1.724 0 0 0 -1.066 2.573c.94 1.543 -.826 3.31 -2.37 2.37a1.724 1.724 0 0 0 -2.572 1.065c-.426 1.756 -2.924 1.756 -3.35 0a1.724 1.724 0 0 0 -2.573 -1.066c-1.543 .94 -3.31 -.826 -2.37 -2.37a1.724 1.724 0 0 0 -1.065 -2.572c-1.756 -.426 -1.756 -2.924 0 -3.35a1.724 1.724 0 0 0 1.066 -2.573c-.94 -1.543 .826 -3.31 2.37 -2.37c1 .608 2.296 .07 2.572 -1.065z"/><path d="M9 12a3 3 0 1 0 6 0a3 3 0 0 0 -6 0"/></g></svg>
<div class="abs" style="left:853.4px;top:145.2px;width:274.8px;height:136px;background:#ced7e3;border-radius:2px"></div>
<svg class="abs" style="left:859px;top:150px" width="34" height="34" viewBox="859 150 34 34">
<rect x="861.2" y="158.4" width="3.4" height="7.6" rx="1.7" fill="#1f3f5a" stroke="#16324a" stroke-width="0.6"/>
<rect x="886.4" y="158.4" width="3.4" height="7.6" rx="1.7" fill="#1f3f5a" stroke="#16324a" stroke-width="0.6"/>
<circle cx="870.7" cy="154.3" r="1.9" fill="#1c3045"/><circle cx="875.3" cy="154.1" r="1.9" fill="#1c3045"/><circle cx="880" cy="154.3" r="1.9" fill="#1c3045"/>
<rect x="864.2" y="154.4" width="22.6" height="19.8" rx="3.8" fill="#79bbd9" stroke="#1d526f" stroke-width="1"/>
<rect x="866.7" y="157" width="17.6" height="13.5" rx="2" fill="#dcedf7" stroke="#1f5876" stroke-width="0.9"/>
<circle cx="870.6" cy="160" r="1.9" fill="#2f6f7c"/><circle cx="870.6" cy="160" r="0.85" fill="#eefaff"/>
<circle cx="880.4" cy="160" r="1.9" fill="#2f6f7c"/><circle cx="880.4" cy="160" r="0.85" fill="#eefaff"/>
<path d="M873.4 162.6q2.1 2.6 4.2 0" fill="none" stroke="#28566e" stroke-width="0.9" stroke-linecap="round"/>
<circle cx="875.5" cy="162.7" r="0.9" fill="#f7fcff"/>
<rect x="868" y="163" width="1.6" height="2.2" rx="0.5" fill="#7d8fa3"/><rect x="881.4" y="163" width="1.6" height="2.2" rx="0.5" fill="#7d8fa3"/>
<path d="M872.8 174.2h5.6l-1.2 2.4h-3.2z" fill="#1f4a66"/>
<path d="M867 181.2q-0.8-4.4 3-4.8h11.2q3.8 0.4 3 4.8z" fill="#8fd0e6" stroke="#1d526f" stroke-width="1" stroke-linejoin="round"/>
<rect x="868.8" y="178.4" width="3.2" height="1.8" fill="#2f7f88"/>
</svg>
<div class="t b" style="left:897px;top:160.33px;font-size:14.5px;color:#111;letter-spacing:-0.22px">ArtBot tip:</div>
<div class="t " style="left:861px;top:191.44px;font-size:12px;color:#1c1c1c;letter-spacing:0.228px">Join the AI Horde community on Discord. Chat</div>
<div class="t " style="left:861px;top:206.84px;font-size:12px;color:#1c1c1c;letter-spacing:0.213px">about AI, generative art, software development</div>
<div class="t " style="left:861px;top:222.24px;font-size:12px;color:#1c1c1c;letter-spacing:0.26px">and more. It's a fun community. Come check it</div>
<div class="t " style="left:861px;top:237.64px;font-size:12px;color:#1c1c1c;letter-spacing:0.2px">out!</div>
<div class="t b teal" style="left:861px;top:260.84px;font-size:12px;letter-spacing:0.1px">View on Discord</div>
<svg class="abs" style="left:973.00px;top:303.50px" width="36" height="36" viewBox="0 0 24 24"><g fill="none" stroke="#ddd" stroke-width="1" stroke-linecap="round" stroke-linejoin="round" ><path d="M15 8h.01"/><path d="M7 3h11a3 3 0 0 1 3 3v11m-.856 3.099a2.991 2.991 0 0 1 -2.144 .901h-12a3 3 0 0 1 -3 -3v-12c0 -.845 .349 -1.608 .91 -2.153"/><path d="M3 16l5 -5c.928 -.893 2.072 -.893 3 0l5 5"/><path d="M16.33 12.338c.574 -.054 1.155 .166 1.67 .662l3 3"/><path d="M3 3l18 18"/></g></svg>
<div class="t " style="left:853px;top:357.54px;font-size:12px;width:275px;text-align:center;letter-spacing:0.15px">You have no pending image requests. Why</div>
<div class="t " style="left:853px;top:374.54px;font-size:12px;width:275px;text-align:center;letter-spacing:0.17px">not create something?</div>
</body>
</html>
